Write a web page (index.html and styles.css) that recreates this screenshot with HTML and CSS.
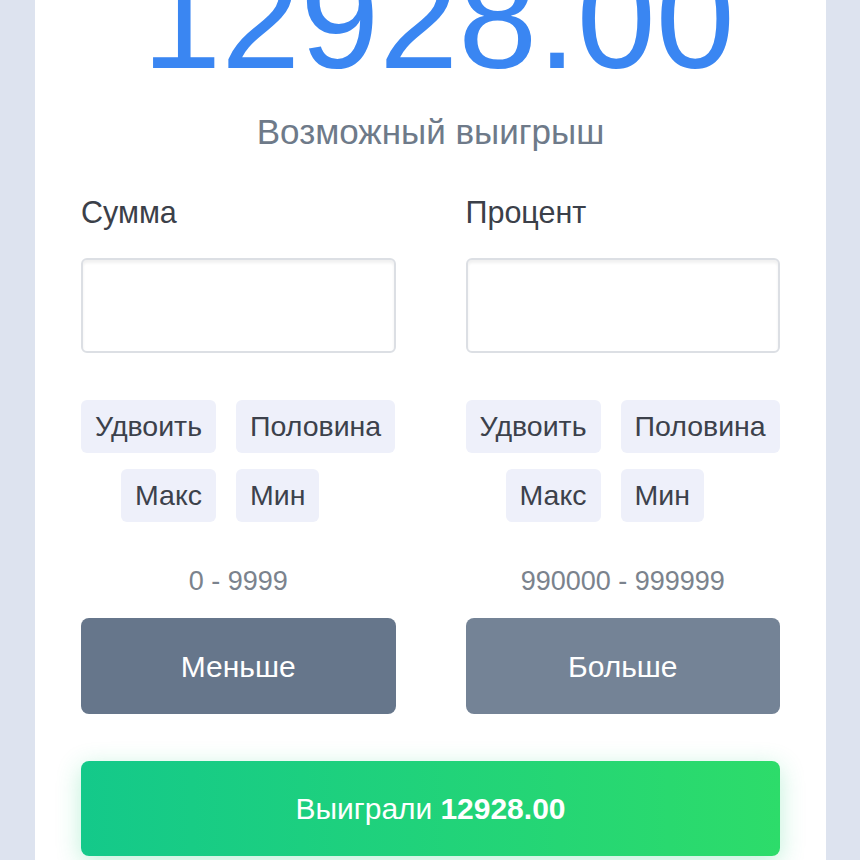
FILE: index.html
```html
<!DOCTYPE html>
<html lang="ru">
<head>
  <meta charset="UTF-8">
  <meta name="viewport" content="width=device-width, initial-scale=1.0">
  <title>Dice</title>
  <link rel="stylesheet" href="styles.css">
</head>
<body>
  <div class="card">
    <div class="win-amount">12928.00</div>
    <div class="win-label">Возможный выигрыш</div>

    <div class="fields">
      <div class="field">
        <label class="field-label" for="amount">Сумма</label>
        <input class="field-input" type="text" id="amount">
        <div class="quick">
          <button class="quick-btn">Удвоить</button>
          <button class="quick-btn">Половина</button>
          <button class="quick-btn">Макс</button>
          <button class="quick-btn">Мин</button>
        </div>
        <div class="range">0 - 9999</div>
        <button class="bet-btn less">Меньше</button>
      </div>

      <div class="field">
        <label class="field-label" for="percent">Процент</label>
        <input class="field-input" type="text" id="percent">
        <div class="quick">
          <button class="quick-btn">Удвоить</button>
          <button class="quick-btn">Половина</button>
          <button class="quick-btn">Макс</button>
          <button class="quick-btn">Мин</button>
        </div>
        <div class="range">990000 - 999999</div>
        <button class="bet-btn more">Больше</button>
      </div>
    </div>

    <div class="result">Выиграли <strong>12928.00</strong></div>
  </div>
</body>
</html>
```

FILE: styles.css
```css
body {
  margin: 0;
  background: #dde3ef;
  font-family: 'Liberation Sans', Arial, sans-serif;
  overflow: hidden;
}
.card {
  width: 791px;
  box-sizing: border-box;
  margin: -52px 0 0 35px;
  padding: 0 46px 40px;
  background: #fff;
}
.win-amount {
  font-size: 142px;
  line-height: 142px;
  color: #3a86f2;
  text-align: center;
  padding-left: 16px;
}
.win-label {
  margin-top: 22px;
  font-size: 35px;
  line-height: 40px;
  color: #6e7a89;
  text-align: center;
}
.fields {
  display: grid;
  grid-template-columns: minmax(0, 1fr) minmax(0, 1fr);
  column-gap: 70px;
  margin-top: 42px;
}
.field {
  display: flex;
  flex-direction: column;
  min-width: 0;
}
.field-label {
  font-size: 30.5px;
  line-height: 36px;
  color: #3b4049;
}
.field-input {
  width: 100%;
  height: 95px;
  margin-top: 28px;
  box-sizing: border-box;
  border: 2px solid #dcdfe4;
  border-radius: 6px;
  box-shadow: inset 0 3px 3px rgba(0, 0, 0, 0.06);
  font-size: 26px;
}
.quick {
  display: grid;
  grid-template-columns: auto auto;
  justify-content: start;
  column-gap: 20px;
  row-gap: 16px;
  margin-top: 47px;
}
.quick-btn {
  height: 53px;
  padding: 0 14px;
  border: none;
  border-radius: 6px;
  background: #eef0fa;
  color: #3c414b;
  font-family: inherit;
  font-size: 28.5px;
}
.quick-btn:nth-child(odd) {
  justify-self: end;
}
.quick-btn:nth-child(even) {
  justify-self: start;
}
.range {
  margin-top: 44px;
  font-size: 27px;
  line-height: 30px;
  color: #7b838d;
  text-align: center;
}
.bet-btn {
  height: 96px;
  margin-top: 22px;
  padding-top: 2px;
  border: none;
  border-radius: 8px;
  color: #fff;
  font-family: inherit;
  font-size: 30px;
}
.less {
  background: #66768b;
}
.more {
  background: #748396;
}
.result {
  height: 95px;
  margin-top: 47px;
  display: flex;
  align-items: center;
  justify-content: center;
  border-radius: 8px;
  background: linear-gradient(90deg, #14c98a, #2ddc6a);
  box-shadow: 0 6px 24px rgba(40, 210, 130, 0.3);
  color: #fff;
  font-size: 30px;
}
.result strong {
  margin-left: 8px;
}
```
